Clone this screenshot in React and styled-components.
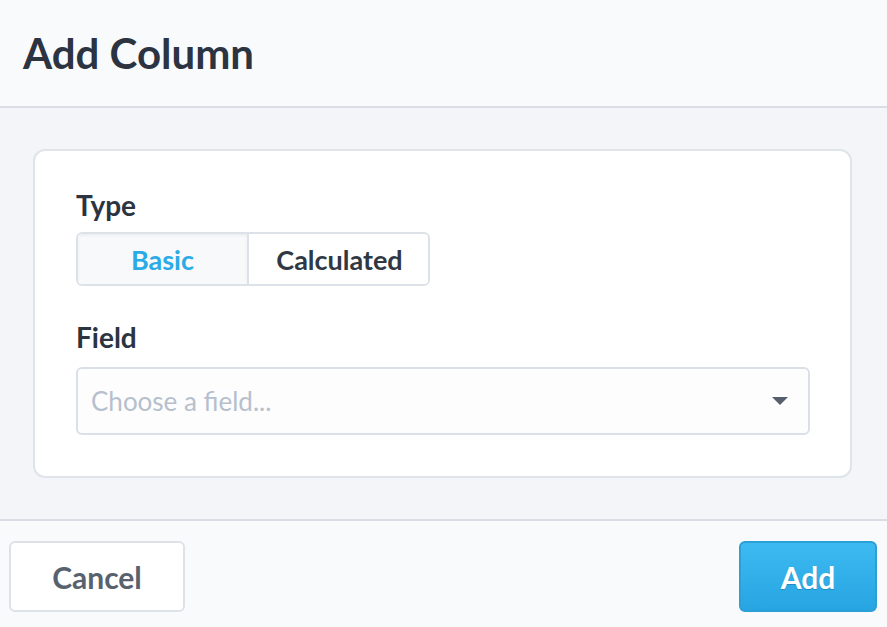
import styled, { createGlobalStyle } from "styled-components";

const GlobalStyle = createGlobalStyle`
  html, body {
    margin: 0;
    padding: 0;
    background: #f9fafc;
  }
  * { box-sizing: border-box; }
  body {
    font-family: "Lato", "Liberation Sans", sans-serif;
    color: #2b3440;
  }
`;

const Modal = styled.div`
  width: 887px;
  height: 627px;
  display: flex;
  flex-direction: column;
  background: #f9fafc;
`;

const Header = styled.header`
  height: 108px;
  padding: 0 23px;
  display: flex;
  align-items: center;
  border-bottom: 2px solid #d9dee6;
  background: #f9fafc;
`;

const Title = styled.h1`
  margin: 0;
  font-size: 42px;
  font-weight: 700;
  color: #2b3440;
`;

const Body = styled.main`
  flex: none;
  padding: 41px 35px 41px 33px;
  background: #f4f5f9;
  border-bottom: 2px solid #d9dee6;
`;

const Card = styled.section`
  background: #ffffff;
  border: 2px solid #dfe3ea;
  border-radius: 12px;
  padding: 37px 40px 41px 41px;
  display: flex;
  flex-direction: column;
`;

const Label = styled.div`
  font-size: 28px;
  font-weight: 700;
  line-height: 34px;
  color: #2b3440;
  margin-top: ${(p) => p.$top || 0}px;
`;

const Segmented = styled.div`
  margin-top: 10px;
  display: flex;
  width: 354px;
  height: 54px;
  border: 2px solid #dde2e9;
  border-radius: 6px;
  overflow: hidden;
`;

const Segment = styled.button`
  all: unset;
  flex: none;
  width: ${(p) => p.$width}px;
  display: flex;
  align-items: center;
  justify-content: center;
  font-family: "Lato", "Liberation Sans", sans-serif;
  font-size: 27px;
  font-weight: 700;
  color: ${(p) => (p.$active ? "#2aabe6" : "#2f3843")};
  background: ${(p) => (p.$active ? "#f8f9fb" : "#ffffff")};
  box-shadow: ${(p) => (p.$active ? "inset 0 2px 3px rgba(40, 60, 90, 0.06)" : "none")};
  & + & {
    border-left: 2px solid #dde2e9;
  }
`;

const Select = styled.div`
  margin-top: 13px;
  height: 68px;
  border: 2px solid #dbe0e8;
  border-radius: 6px;
  background: #fdfdfe;
  display: flex;
  align-items: center;
  justify-content: space-between;
  padding: 0 20px 0 13px;
`;

const Placeholder = styled.span`
  font-size: 26px;
  font-weight: 400;
  color: #b6c0cd;
`;

const Caret = styled.svg`
  width: 16px;
  height: 8px;
  fill: #575f6c;
`;

const Footer = styled.footer`
  flex: 1;
  padding: 20px 10px 0 9px;
  display: flex;
  justify-content: space-between;
  align-items: flex-start;
  background: #f9fafc;
`;

const Button = styled.button`
  all: unset;
  height: 71px;
  width: ${(p) => p.$width}px;
  border-radius: 6px;
  display: flex;
  align-items: center;
  justify-content: center;
  font-family: "Lato", "Liberation Sans", sans-serif;
  font-size: 30px;
  font-weight: 700;
  box-sizing: border-box;
  ${(p) =>
    p.$primary
      ? `
    color: #ffffff;
    background: linear-gradient(#3dbaf1, #27a5e2);
    border: 2px solid #2b9fd8;
    text-shadow: 0 1px 1px rgba(0, 60, 110, 0.3);
  `
      : `
    color: #58626f;
    background: #ffffff;
    border: 2px solid #dde2e9;
  `}
`;

export default function App() {
  return (
    <>
      <GlobalStyle />
      <Modal>
        <Header>
          <Title>Add Column</Title>
        </Header>
        <Body>
          <Card>
            <Label>Type</Label>
            <Segmented>
              <Segment $active $width={169}>
                Basic
              </Segment>
              <Segment $width={181}>Calculated</Segment>
            </Segmented>
            <Label $top={34}>Field</Label>
            <Select>
              <Placeholder>Choose a field...</Placeholder>
              <Caret viewBox="0 0 16 8">
                <path d="M0 0h16L8 8z" />
              </Caret>
            </Select>
          </Card>
        </Body>
        <Footer>
          <Button $width={176}>Cancel</Button>
          <Button $primary $width={138}>
            Add
          </Button>
        </Footer>
      </Modal>
    </>
  );
}
